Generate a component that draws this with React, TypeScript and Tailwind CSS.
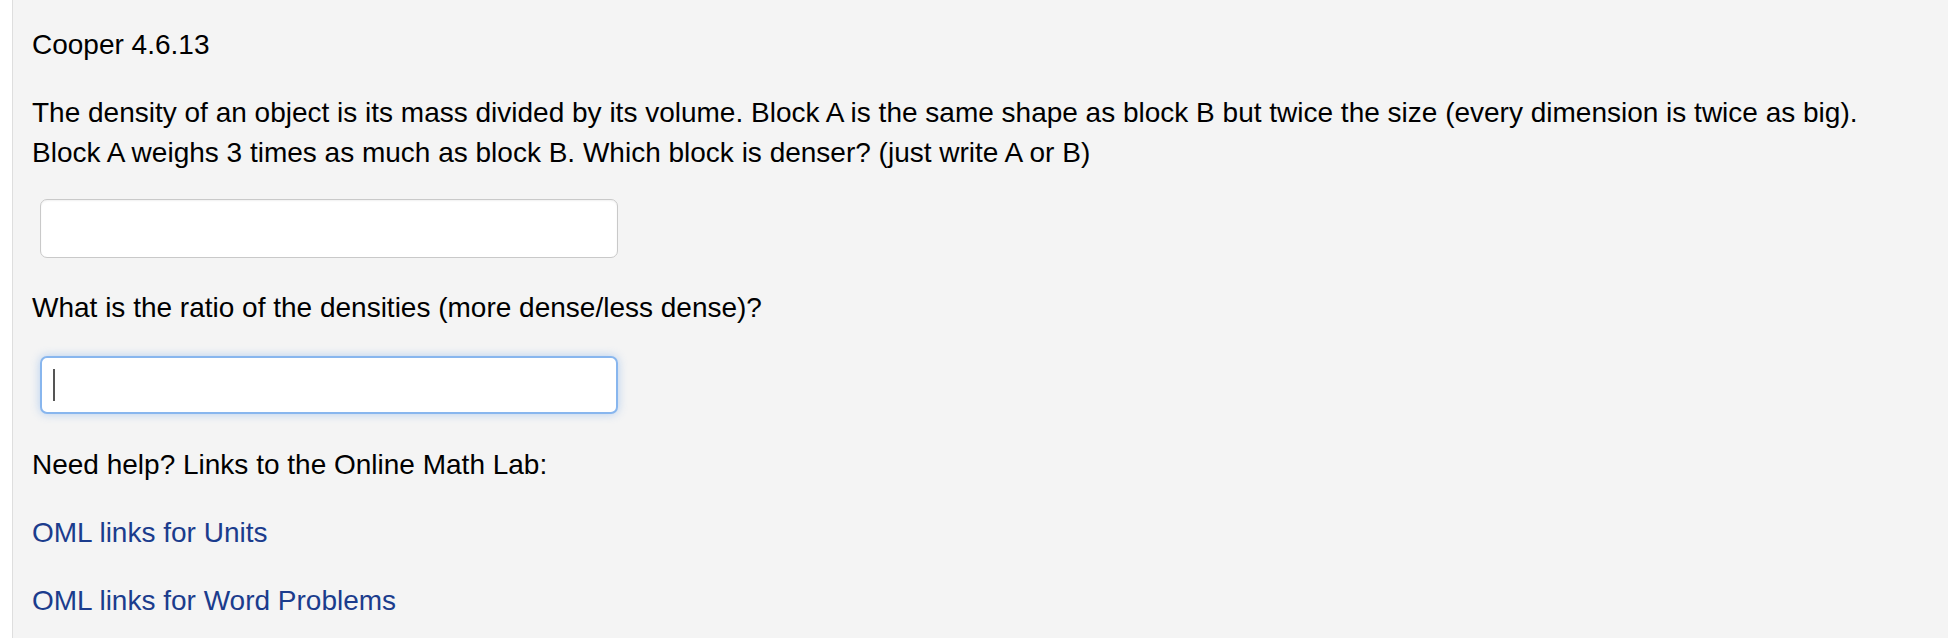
export default function App() {
  return (
    <div
      className="min-h-[638px] w-full bg-white pl-[12px] flex"
      style={{ fontFamily: '"Liberation Sans", Arial, Helvetica, sans-serif' }}
    >
      <div className="flex-1 min-h-[638px] bg-[#f4f4f4] border-l border-[#dedede] pl-[19px] pr-5 pt-[25px] text-[28px] leading-[40px] text-black">
        <p>Cooper 4.6.13</p>

        <p className="mt-[28px]">
          The density of an object is its mass divided by its volume. Block A is the same shape as block B
          but twice the size (every dimension is twice as big). Block A weighs 3 times as much as block B.
          Which block is denser? (just write A or B)
        </p>

        {/* first answer box */}
        <input
          type="text"
          readOnly
          className="block mt-[26px] ml-2 w-[578px] h-[59px] rounded-[7px] bg-white border-[1.5px] border-[#c9c9c9] shadow-[inset_0_1px_2px_rgba(0,0,0,0.06)] outline-none"
        />

        <p className="mt-[30px]">What is the ratio of the densities (more dense/less dense)?</p>

        {/* second answer box, shown focused */}
        <div className="relative mt-[28px] ml-2 w-[578px] h-[58px] rounded-[7px] bg-white border-2 border-[#88b6ee] shadow-[0_0_10px_rgba(102,160,233,0.45)]">
          <span className="absolute left-[11px] top-[11px] w-[2px] h-[32px] bg-[#555]" />
        </div>

        <p className="mt-[31px]">Need help? Links to the Online Math Lab:</p>

        <p className="mt-[28px]">
          <a href="#" className="text-[#1b3c8d]">
            OML links for Units
          </a>
        </p>

        <p className="mt-[28px]">
          <a href="#" className="text-[#1b3c8d]">
            OML links for Word Problems
          </a>
        </p>
      </div>
    </div>
  );
}
